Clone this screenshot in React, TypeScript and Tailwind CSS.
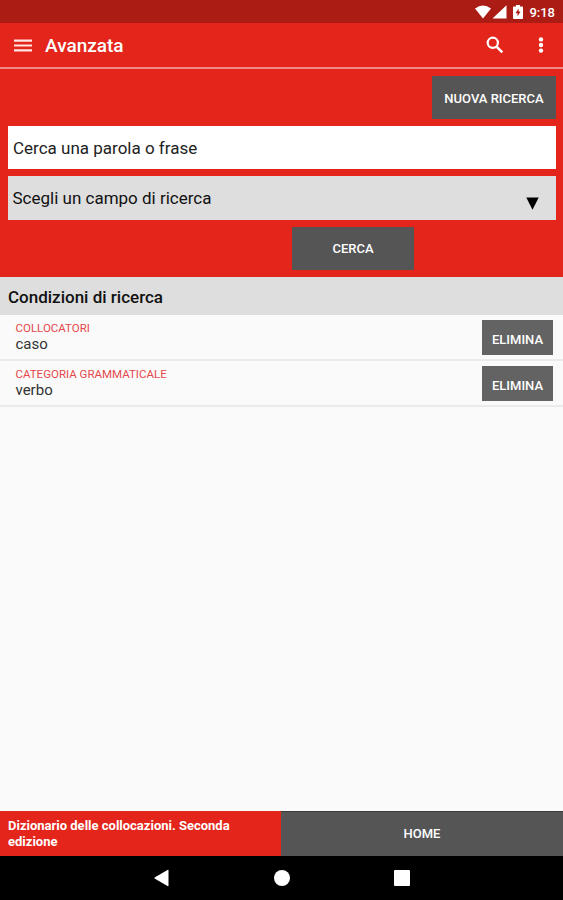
import { useState } from 'react';

type Condition = { id: number; field: string; value: string };

const initialConditions: Condition[] = [
  { id: 1, field: 'COLLOCATORI', value: 'caso' },
  { id: 2, field: 'CATEGORIA GRAMMATICALE', value: 'verbo' },
];

export default function App() {
  const [conditions, setConditions] = useState(initialConditions);
  const [query, setQuery] = useState('');

  const remove = (id: number) => setConditions(conditions.filter(c => c.id !== id));

  return (
    <div className="flex h-[900px] w-[563px] flex-col overflow-hidden bg-[#fafafa] font-['Roboto',sans-serif] text-[#111]">
      <StatusBar />
      <Toolbar />

      <section className="flex h-[208px] flex-col bg-[#e3251b] px-2 pt-[7px]">
        <button className="-mr-px h-[43px] w-[124px] self-end bg-[#555] pt-[2px] text-[13px] font-medium text-white">
          NUOVA RICERCA
        </button>
        <input
          value={query}
          onChange={e => setQuery(e.target.value)}
          placeholder="Cerca una parola o frase"
          className="mt-[7px] h-[43px] w-[548px] bg-white px-[5px] pt-px text-[17px] outline-none placeholder:text-[#222]"
        />
        <button className="mt-[7px] flex h-[44px] w-[548px] items-center justify-between bg-[#dedede] pr-[17px] pl-[4.5px] text-[17px]">
          <span className="pt-[2px]">Scegli un campo di ricerca</span>
          <svg width="13" height="13" viewBox="0 0 13 13" className="mt-[10px]">
            <path d="M0.3 0.5h12.4L6.5 12.8z" fill="#000" />
          </svg>
        </button>
        <button className="mt-[7px] ml-[284px] h-[43px] w-[122px] shrink-0 bg-[#555] text-[13px] font-medium text-white">
          CERCA
        </button>
      </section>

      <h2 className="flex h-[38px] shrink-0 items-center bg-[#dedede] px-2 pt-[3px] text-[17px] font-medium">
        Condizioni di ricerca
      </h2>
      <ul className="flex-1">
        {conditions.map(c => (
          <li key={c.id} className="flex h-[46px] justify-between border-b-2 border-[#ebebeb] pt-[5px] pr-[10px] pl-[15.5px]">
            <div className="pt-px">
              <div className="text-[11.5px] leading-[14px] text-[#e5484c]">{c.field}</div>
              <div className="text-[15px] leading-[18px] text-[#333]">{c.value}</div>
            </div>
            <button
              onClick={() => remove(c.id)}
              className="h-[35px] w-[71px] bg-[#636363] pt-[4px] text-[13px] font-medium text-white"
            >
              ELIMINA
            </button>
          </li>
        ))}
      </ul>

      <footer className="flex h-[45px] shrink-0 text-white">
        <div className="w-[281px] bg-[#e3251b] pt-[7px] pr-8 pl-2 text-[13px] leading-[16px] font-bold">
          Dizionario delle collocazioni. Seconda edizione
        </div>
        <button className="flex-1 border-t border-[#3a3a3a] bg-[#555] text-[13px] font-medium">HOME</button>
      </footer>
      <NavigationBar />
    </div>
  );
}

function StatusBar() {
  return (
    <div className="flex h-[23px] shrink-0 items-center justify-end bg-[#ab1c15] pt-px pr-[8px] text-white">
      <svg width="32" height="16" viewBox="0 0 32 16" fill="currentColor" className="mr-[6px]">
        {/* wifi */}
        <path d="M0 4.500Q8 -1.300 16 4.500L8 14.500z" />
        {/* signal */}
        <path d="M31.500 1.200V14.500H17.500z" />
      </svg>
      <svg width="10" height="14" viewBox="0 0 10 14" className="mr-[6px]">
        <path d="M3 0h4v1.5h2.2q.8 0 .8.8v10.9q0 .8-.8.8H.8q-.8 0-.8-.8V2.300q0-.8.8-.8H3z" fill="#fff" />
        <path d="M5.600 3.500L2.500 8.300h2v3.200l3-4.900h-1.900z" fill="#ab1c15" />
      </svg>
      <span className="pt-px text-[13px] font-medium">9:18</span>
    </div>
  );
}

function Toolbar() {
  return (
    <header className="flex h-[46px] shrink-0 items-center border-b-2 border-[#f28b86] bg-[#e3251b] pl-[14px] text-white">
      <svg width="18" height="13" viewBox="0 0 18 13" fill="#ffe4e2">
        <path d="M0 0.500h18v2.200H0zM0 5.400h18v2.200H0zM0 10.300h18v2.200H0z" />
      </svg>
      <h1 className="ml-[13px] flex-1 pt-[3px] text-[19px] font-medium">Avanzata</h1>
      <svg width="18" height="18" viewBox="0 0 18 18" fill="none" stroke="currentColor" className="mr-[34px]">
        <circle cx="6.800" cy="6.800" r="5.100" strokeWidth="2.200" />
        <path d="M10.800 10.800L16.300 16.300" strokeWidth="2.600" />
      </svg>
      <svg width="6" height="16" viewBox="0 0 6 16" fill="currentColor" className="mr-[19px]">
        <circle cx="3" cy="2.400" r="2.200" />
        <circle cx="3" cy="8" r="2.200" />
        <circle cx="3" cy="13.600" r="2.200" />
      </svg>
    </header>
  );
}

function NavigationBar() {
  return (
    <nav className="flex h-[44px] shrink-0 items-center justify-center gap-[104px] bg-black">
      <svg width="16" height="18" viewBox="0 0 16 18" fill="#fff">
        <path d="M1 8.200L13.500 1q1-.5 1 .5v15q0 1-1 .5L1 9.800q-1.200-.8 0-1.600z" />
      </svg>
      <div className="size-4 rounded-full bg-white" />
      <div className="size-4 rounded-[1px] bg-white" />
    </nav>
  );
}
